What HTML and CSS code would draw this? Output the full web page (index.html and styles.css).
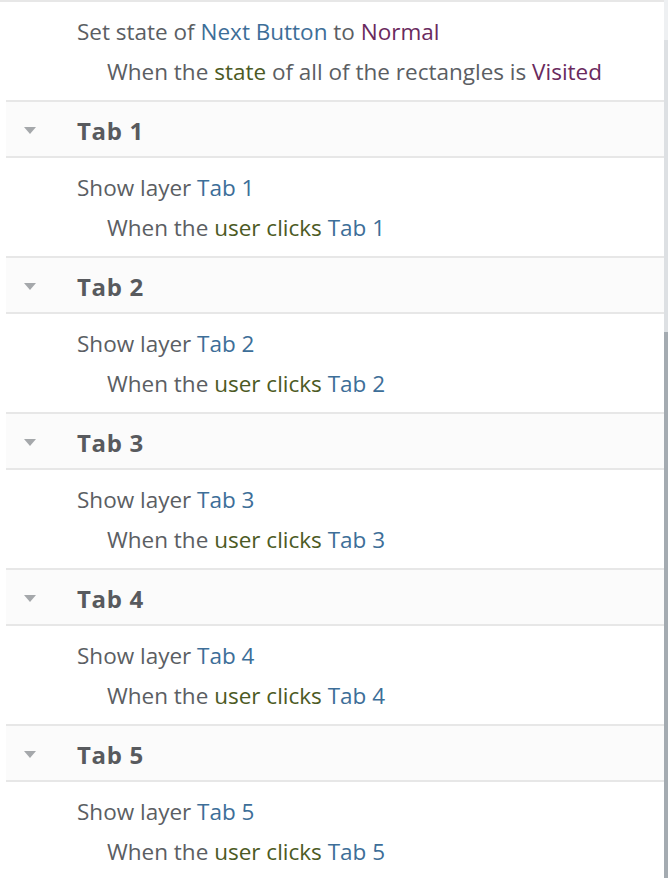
FILE: index.html
```html
<!DOCTYPE html>
<html>
<head>
<meta charset="utf-8">
<link rel="stylesheet" href="styles.css">
</head>
<body>
<div class="frame">
  <div class="list">
    <div class="content">
      <div class="line">Set state of <span class="obj">Next Button</span> to <span class="val">Normal</span></div>
      <div class="line cond">When the <span class="kw">state</span> of all of the rectangles is <span class="val">Visited</span></div>
    </div>

    <div class="header"><span class="tri"></span><span class="title">Tab 1</span></div>
    <div class="content">
      <div class="line">Show layer <span class="obj">Tab 1</span></div>
      <div class="line cond">When the <span class="kw">user clicks</span> <span class="obj">Tab 1</span></div>
    </div>

    <div class="header"><span class="tri"></span><span class="title">Tab 2</span></div>
    <div class="content">
      <div class="line">Show layer <span class="obj">Tab 2</span></div>
      <div class="line cond">When the <span class="kw">user clicks</span> <span class="obj">Tab 2</span></div>
    </div>

    <div class="header"><span class="tri"></span><span class="title">Tab 3</span></div>
    <div class="content">
      <div class="line">Show layer <span class="obj">Tab 3</span></div>
      <div class="line cond">When the <span class="kw">user clicks</span> <span class="obj">Tab 3</span></div>
    </div>

    <div class="header"><span class="tri"></span><span class="title">Tab 4</span></div>
    <div class="content">
      <div class="line">Show layer <span class="obj">Tab 4</span></div>
      <div class="line cond">When the <span class="kw">user clicks</span> <span class="obj">Tab 4</span></div>
    </div>

    <div class="header"><span class="tri"></span><span class="title">Tab 5</span></div>
    <div class="content">
      <div class="line">Show layer <span class="obj">Tab 5</span></div>
      <div class="line cond">When the <span class="kw">user clicks</span> <span class="obj">Tab 5</span></div>
    </div>
  </div>
  <div class="scrollbar">
    <div class="track-top"></div>
    <div class="track"></div>
    <div class="thumb"></div>
  </div>
</div>
</body>
</html>
```
FILE: styles.css
```css
html, body {
  margin: 0;
  padding: 0;
  background: #ffffff;
  height: 878px;
  overflow: hidden;
}
body {
  font-family: "Open Sans", "Noto Sans", sans-serif;
  font-size: 22.5px;
  color: #5b5e63;
}
.frame {
  display: flex;
  height: 878px;
  border-top: 2px solid #e7e7e7;
  box-sizing: border-box;
}
.list {
  flex: 1;
  margin-left: 6px;
  display: flex;
  flex-direction: column;
}
.content {
  height: 98px;
  box-sizing: border-box;
  padding: 10px 0 8px 71px;
  background: #ffffff;
  flex-shrink: 0;
}
.line {
  height: 40px;
  line-height: 40px;
  white-space: nowrap;
}
.cond {
  padding-left: 30px;
}
.obj { color: #3d6e98; }
.val { color: #6a2a5e; }
.kw { color: #4c5a24; }
.header {
  height: 58px;
  flex-shrink: 0;
  box-sizing: border-box;
  border-top: 2px solid #e7e7e7;
  border-bottom: 2px solid #e7e7e7;
  background: #fbfbfb;
  display: flex;
  align-items: center;
  padding-top: 2px;
}
.tri {
  width: 0;
  height: 0;
  margin-left: 18px;
  border-left: 6px solid transparent;
  border-right: 6px solid transparent;
  border-top: 7px solid #a5a8ab;
}
.title {
  margin-left: 41px;
  font-weight: bold;
  font-size: 24px;
  letter-spacing: 0.7px;
  color: #585a5e;
}
.scrollbar {
  width: 4px;
  display: flex;
  flex-direction: column;
  margin-top: -2px;
}
.track-top {
  height: 40px;
  background: #eef0f2;
  flex-shrink: 0;
}
.track {
  height: 292px;
  background: #dde0e3;
  flex-shrink: 0;
}
.thumb {
  flex: 1;
  background: #a4abb1;
}
```
